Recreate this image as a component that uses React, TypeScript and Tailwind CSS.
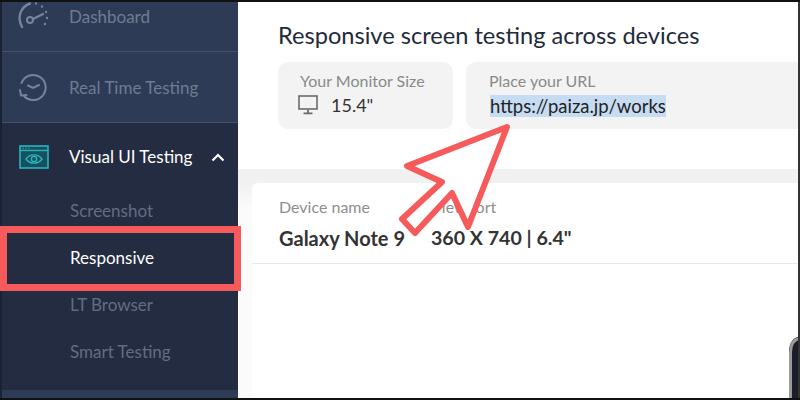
import React from "react";

function Gauge() {
  return (
    <svg width="34" height="30" viewBox="0 0 34 30" fill="none" stroke="#77839a" strokeLinecap="round" className="shrink-0">
      <path d="M6 26 C1 17 4 6 14 2.5" strokeWidth="2.4" />
      <circle cx="14" cy="19" r="3" strokeWidth="2" />
      <path d="M17 18 L27 13" strokeWidth="2.4" />
      <path d="M20 2.5v0M26 5.5v0M30 11v0M31 17v0M29 23v0" strokeWidth="2.4" />
    </svg>
  );
}

function Clock() {
  return (
    <svg width="30" height="30" viewBox="0 0 30 30" fill="none" stroke="#77839a" strokeLinecap="round" className="shrink-0">
      <path d="M3.5 11 A12.5 12.5 0 1 1 6 24" strokeWidth="2" />
      <path d="M2 18 L3 23.5 L8.5 23" strokeWidth="2" />
      <path d="M10 13.5 L15 16 L21 13" strokeWidth="2" />
    </svg>
  );
}

function EyeWindow() {
  return (
    <svg width="30" height="24" viewBox="0 0 30 24" fill="none" stroke="#2bb3bd" className="shrink-0">
      <rect x="1" y="1" width="28" height="22" strokeWidth="1.6" fill="#17505f" />
      <path d="M1 5.5h28" strokeWidth="1.4" />
      <path d="M3.5 3.3h1M6.5 3.3h1M9.5 3.3h1" strokeWidth="1.2" />
      <path d="M7 14 C11 8.5 19 8.5 23 14 C19 19.5 11 19.5 7 14Z" strokeWidth="1.4" />
      <circle cx="15" cy="14" r="2.6" strokeWidth="1.4" />
    </svg>
  );
}

function Monitor() {
  return (
    <svg width="21" height="20" viewBox="0 0 21 20" fill="none" stroke="#6b6b6b" className="-ml-[2px] shrink-0">
      <rect x="1" y="1" width="18" height="13" strokeWidth="1.6" />
      <path d="M10 15v3M5.5 18.3h9" strokeWidth="1.8" />
    </svg>
  );
}

function SideRow({ icon, label }: { icon: React.ReactNode; label: string }) {
  return (
    <div className="box-content flex h-[70px] items-center border-b border-[#465168] bg-[#2e3b56]">
      <div className="flex w-[67px] shrink-0 justify-center pr-[5px]">{icon}</div>
      <span className="mt-[1px] text-[17px] text-[#6e7b92]">{label}</span>
    </div>
  );
}

function SubItem({ label, active }: { label: string; active?: boolean }) {
  return (
    <div className={`flex h-[47px] items-center pl-[70px] text-[17px] ${active ? "text-white" : "text-[#626d84]"}`}>
      {label}
    </div>
  );
}

export default function App() {
  return (
    <div className="relative flex h-[400px] w-[800px] overflow-hidden border-y-2 border-[#111] bg-white font-['Lato','Liberation_Sans',sans-serif]">
      <aside className="flex h-full w-[238px] shrink-0 flex-col overflow-hidden border-l-2 border-[#1a2233] bg-[#232c40]">
        <div className="-mt-[21px]">
          <SideRow icon={<Gauge />} label="Dashboard" />
          <SideRow icon={<Clock />} label="Real Time Testing" />
        </div>
        <div className="-mt-px flex h-[70px] shrink-0 items-center">
          <div className="flex w-[67px] shrink-0 justify-center pr-[4px]">
            <EyeWindow />
          </div>
          <span className="text-[17px] text-white">Visual UI Testing</span>
          <svg width="14" height="9" viewBox="0 0 14 9" fill="none" stroke="white" strokeWidth="2.2" className="ml-[19px]">
            <path d="M1.5 7.5 L7 2 L12.5 7.5" />
          </svg>
        </div>
        <div className="-ml-[2px] -mt-[5px]">
          <SubItem label="Screenshot" />
          <SubItem label="Responsive" active />
          <SubItem label="LT Browser" />
          <SubItem label="Smart Testing" />
        </div>
        <div className="mt-[15px] flex-1 bg-[#2e3b56]" />
      </aside>

      <main className="flex min-w-0 flex-1 flex-col">
        <section className="h-[167px] shrink-0 pl-[40px] pt-[19px]">
          <h1 className="text-[23.6px] leading-[29px] text-[#1f2a3a]">Responsive screen testing across devices</h1>
          <div className="mt-[12px] flex gap-[13px]">
            <div className="h-[67px] w-[175px] rounded-[10px] bg-[#f3f3f3] pl-[22px] pt-[10px]">
              <div className="text-[16px] leading-[18px] text-[#8a8a8a]">Your Monitor Size</div>
              <div className="mt-[3px] flex items-center gap-[12px] text-[18px] leading-[24px] text-[#333]">
                <Monitor />
                <span>15.4"</span>
              </div>
            </div>
            <div className="h-[67px] flex-1 rounded-l-[10px] bg-[#f3f3f3] pl-[23px] pt-[10px]">
              <div className="text-[16px] leading-[18px] text-[#8a8a8a]">Place your URL</div>
              <div className="mt-[4px] pl-[1px] text-[18.5px] leading-[24px] text-[#222]">
                <span className="bg-[#c6dcf2]">https://paiza.jp/works</span>
              </div>
            </div>
          </div>
        </section>
        <section className="flex-1 bg-linear-to-b from-[#f1f1f1] from-[14px] to-[#fbfbfb] to-[40px] pl-[14px] pt-[14px]">
          <div className="relative h-full overflow-hidden rounded-tl-[6px] bg-white pl-[27px] pt-[15px]">
            <div className="flex h-[65px] w-full">
              <div className="w-[152px]">
                <div className="text-[16px] leading-[18px] text-[#8e8e8e]">Device name</div>
                <div className="mt-[10px] text-[20px] font-bold leading-[24px] text-[#333]">Galaxy Note 9</div>
              </div>
              <div>
                <div className="text-[16px] leading-[18px] text-[#8e8e8e]">Viewport</div>
                <div className="mt-[10px] text-[19.6px] font-bold leading-[24px] text-[#333]">360 X 740 | 6.4"</div>
              </div>
            </div>
            <div className="-ml-[27px] border-t border-[#e8e8e8]" />
          </div>
        </section>
      </main>

      {/* Device corner peeking in at bottom right */}
      <svg className="absolute bottom-0 right-0" width="14" height="62" viewBox="0 0 14 62" fill="none">
        <path d="M14 0 C6 2 3 8 3 16 L3 62 L14 62 Z" fill="#1b1d28" />
        <path d="M14 2 C7 4 4.5 9 4.5 16 L4.5 62" stroke="#9a9a9a" strokeWidth="3" />
      </svg>

      {/* Right edge of the frame */}
      <div className="absolute inset-y-0 right-0 w-[2px] bg-[#333]" />

      {/* Red highlight round the Responsive item */}
      <div className="absolute left-0 top-[224px] h-[65px] w-[241px] border-[7px] border-[#f75a5a]" />

      {/* Red arrow annotation */}
      <svg className="absolute left-0 top-[-2px]" width="800" height="400" viewBox="0 0 800 400" fill="none">
        <path
          d="M507 127 L407 166 L442 182 L402 219 L415 233 L452 193 L468 227 Z"
          fill="white"
          stroke="#f75a5a"
          strokeWidth="6"
          strokeLinejoin="round"
        />
      </svg>
    </div>
  );
}
